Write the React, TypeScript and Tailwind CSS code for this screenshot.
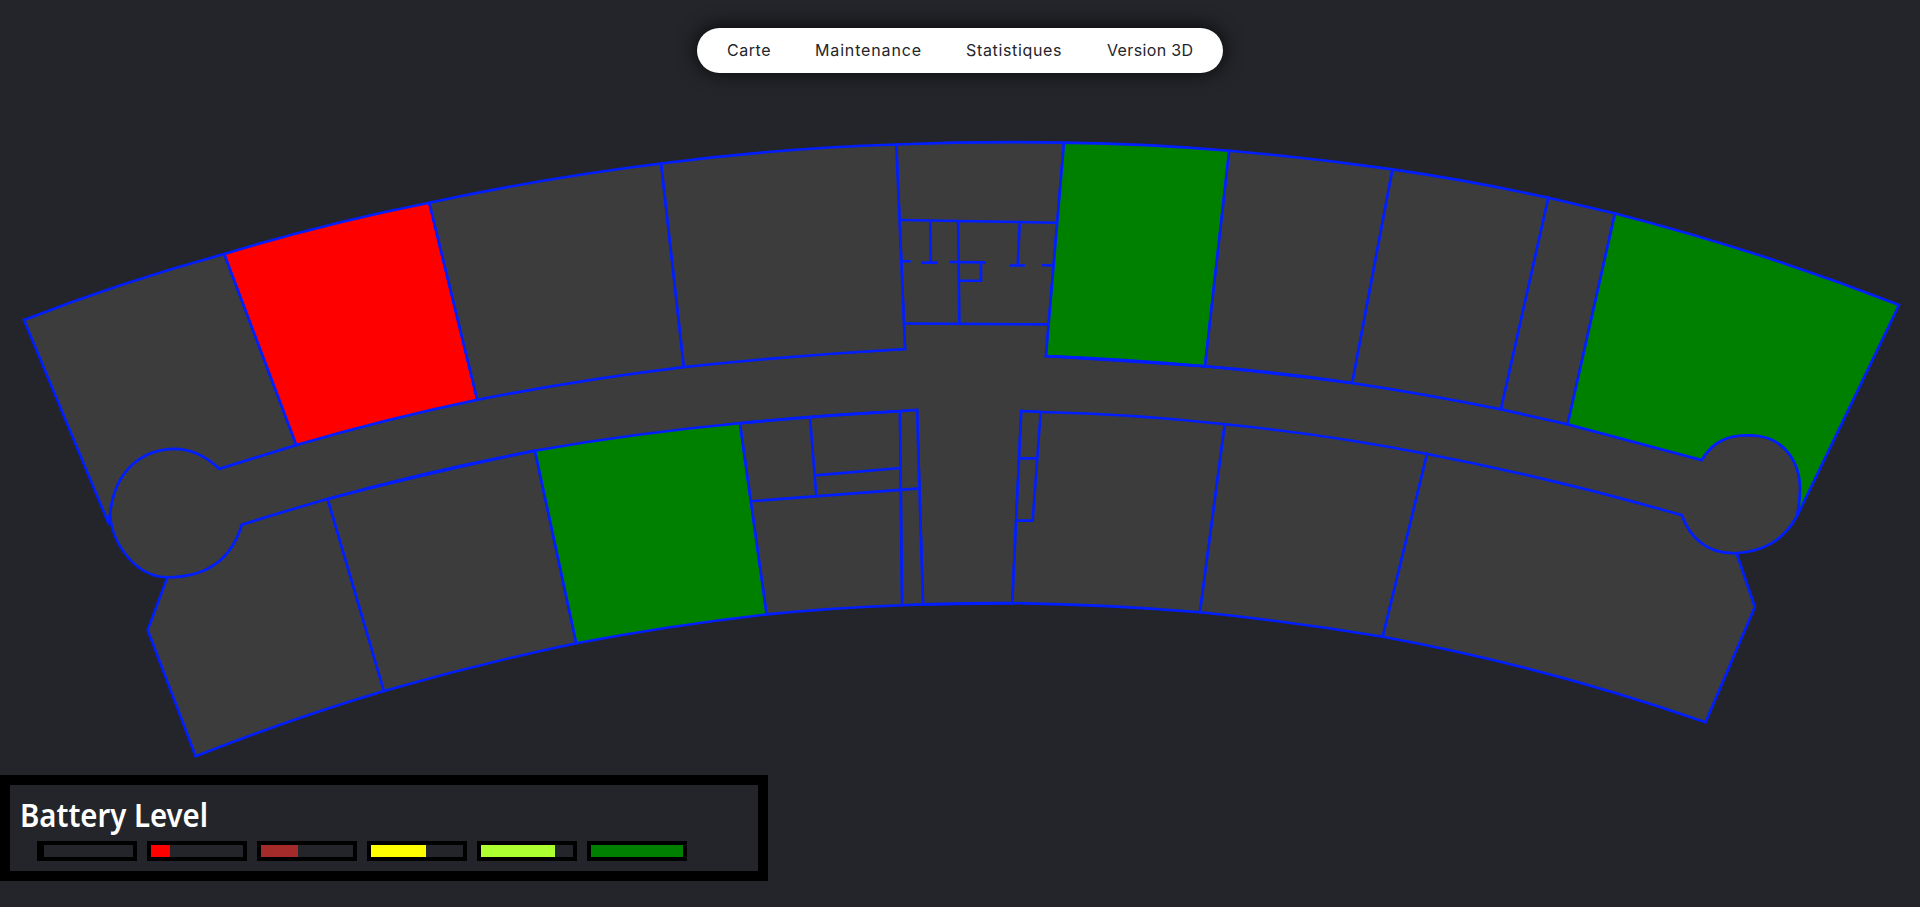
type Room = { d: string; fill?: string };

const rooms: Room[] = [
  // corridor with its two round ends
  {
    d: 'M219.3 468.7L296.3 445A2300 2300 0 0 1 477.3 399.7A2900 2900 0 0 1 683.9 367A3300 3300 0 0 1 905 349L896.3 144.5A2900 2900 0 0 1 1064 142.6L1046 356L1205 366.3A3300 3300 0 0 1 1352.3 383A3000 3000 0 0 1 1501 409.3L1567.7 424.3L1701.7 460C1713 441 1728 435.3 1748 435.3C1767 435.3 1780 441 1790 455C1802 472 1802 492 1797 516C1783 541 1763 552 1733 553.3C1707 553.3 1690 538 1681.7 515.2L1427.2 454L1224.8 424.3L1040.7 412L1021.3 411L1012.3 603.3L923 604.5L917 410A4200 4200 0 0 0 740 423.3A4200 4200 0 0 0 535 450.7A4500 4500 0 0 0 327.7 499L242 524.7C231 561 205 577.5 168 577.3C135 577.3 112 543 110 514C114 474 138 450 173.5 448.7C192 448.7 206 456 219.3 468.7Z',
  },
  // upper row
  {
    d: 'M24 320A2000 2000 0 0 1 224.3 254L296.3 445L219.3 468.7C206 456 192 448.7 173.5 448.7C138 450 114 474 110 514L108 522Z',
  },
  { d: 'M224.3 254A2100 2100 0 0 1 429.3 202.7L477.3 399.7A2300 2300 0 0 0 296.3 445Z', fill: 'red' },
  { d: 'M429.3 202.7A2600 2600 0 0 1 661.2 163.5L683.9 367A2900 2900 0 0 0 477.3 399.7Z' },
  { d: 'M661.2 163.5A2400 2400 0 0 1 896.3 144.5L905 349A4500 4500 0 0 0 683.9 367Z' },
  { d: 'M1064 142.6A2200 2200 0 0 1 1229.2 150.8L1205 366.3A5000 5000 0 0 0 1046 356Z', fill: 'green' },
  { d: 'M1229.2 150.8A2800 2800 0 0 1 1392.5 169.4L1352.3 383A2000 2000 0 0 0 1205 366.3Z' },
  { d: 'M1392.5 169.4A2200 2200 0 0 1 1548.4 197.8L1501 409.3A3000 3000 0 0 0 1352.3 383Z' },
  { d: 'M1548.4 197.8L1615 213.4L1567.7 424.3L1501 409.3Z' },
  {
    d: 'M1615 213.4A2500 2500 0 0 1 1899 305L1798 514L1797 516C1802 492 1802 472 1790 455C1780 441 1767 435.3 1748 435.3C1728 435.3 1713 441 1701.7 460L1567.7 424.3Z',
    fill: 'green',
  },
  // lower row
  {
    d: 'M242 524.7A3000 3000 0 0 1 327.7 499L384 691A2300 2300 0 0 0 195.7 756.3L147.7 630L167.3 577.5C205 577.5 231 561 242 524.7Z',
  },
  { d: 'M327.7 499A2300 2300 0 0 1 535 450.7L576.3 643.2A2700 2700 0 0 0 384 691Z' },
  { d: 'M535 450.7A2600 2600 0 0 1 740 423.3L766.7 614.4A2600 2600 0 0 0 576.3 643.2Z', fill: 'green' },
  { d: 'M740 423.3A2600 2600 0 0 1 900 411.2L902.2 605.2A2100 2100 0 0 0 766.7 614.4Z' },
  { d: 'M900 411.2L917 410L923 604.4L902.2 605.2Z' },
  { d: 'M1021.3 411L1040.7 412A2000 2000 0 0 1 1224.8 424.3L1200 612.3A2800 2800 0 0 0 1012.3 603.1Z' },
  { d: 'M1224.8 424.3A2100 2100 0 0 1 1427.1 454L1382.8 636.7A2800 2800 0 0 0 1200 612.3Z' },
  {
    d: 'M1427.1 454A2900 2900 0 0 1 1681.7 515.2C1690 538 1707 553.3 1733 553.3L1736.7 553.5L1754.8 607L1705.5 722.3A2150 2150 0 0 0 1382.8 636.7Z',
  },
];

const walls = [
  // second skin of the corridor walls
  'M740 423.3A4200 4200 0 0 1 900 411.2',
  'M327.7 499A4500 4500 0 0 1 535 450.7',
  'M1046 356A3000 3000 0 0 1 1205 366.3A4500 4500 0 0 1 1352.3 383',
  // partitions of the central upper block
  'M900 220L1056.7 222.7',
  'M904.3 323.5L1048.7 324.4',
  'M901.3 261.3H910.7',
  'M921.3 262.6H938',
  'M930.3 220.5L930.8 262.6',
  'M949.7 262L986 262.4',
  'M958.1 221L959.4 323.7',
  'M981 262.4V280.7H958.7',
  'M1019.8 222.3L1017.7 265.4',
  'M1010 265.5H1025',
  'M1042 265L1053.3 265.6',
  // partitions of the lower block
  'M810 417L816.3 496',
  'M815.3 475.4L900.5 468',
  'M750.7 501.2L919.7 488.4',
  'M1040.7 412L1032.7 520.6H1016.5',
  'M1019 458.4H1037.3',
  'M923 604.4Q968 603 1012.3 603.1',
];

const links = [
  { label: 'Carte', box: 'w-[43px] tracking-[0.55px]' },
  { label: 'Maintenance', box: 'w-[106px] tracking-[0.85px]' },
  { label: 'Statistiques', box: 'w-[96px] tracking-[0.66px]' },
  { label: 'Version 3D', box: 'w-[87px] tracking-[0.36px]' },
];

const levels = [
  'w-[3px] bg-black',
  'w-[19px] bg-[red]',
  'w-[37px] bg-[brown]',
  'w-[55px] bg-[yellow]',
  'w-[74px] bg-[greenyellow]',
  'w-[92px] bg-[green]',
];

function FloorPlan() {
  return (
    <svg
      className="col-start-1 row-start-1"
      width="1920"
      height="907"
      viewBox="0 0 1920 907"
      stroke="#001eff"
      strokeWidth="2.6"
    >
      {rooms.map((room) => (
        <path key={room.d} d={room.d} fill={room.fill ?? '#3c3c3c'} />
      ))}
      <path d={walls.join('')} fill="none" />
    </svg>
  );
}

export default function App() {
  return (
    <div className="grid h-[907px] w-[1920px] overflow-hidden bg-[#24252a]">
      <FloorPlan />
      <div className="z-10 col-start-1 row-start-1 flex flex-col items-start justify-between pt-7 pb-[26px]">
        <nav className="ml-[697px] flex h-[45px] w-[526px] items-center gap-[45px] rounded-full bg-white pb-[2px] pl-[30px] font-['Inter',sans-serif] text-[16px] text-[#24252a] shadow-[0_-1px_20px_rgba(0,0,0,0.85)]">
          {links.map((link) => (
            <a key={link.label} href="#" className={`${link.box} shrink-0 whitespace-nowrap`}>
              {link.label}
            </a>
          ))}
        </nav>
        <section className="flex h-[106px] w-[768px] flex-col border-10 border-black pt-[10px] pl-[10px]">
          <h2 className="h-[46px] origin-left scale-x-[0.917] font-['Noto_Sans',sans-serif] text-[32px] leading-[40px] font-semibold text-white">
            Battery Level
          </h2>
          <div className="ml-[17px] flex gap-2.5">
            {levels.map((level) => (
              <div key={level} className="h-5 w-[100px] border-4 border-black">
                <div className={`h-3 ${level}`} />
              </div>
            ))}
          </div>
        </section>
      </div>
    </div>
  );
}
